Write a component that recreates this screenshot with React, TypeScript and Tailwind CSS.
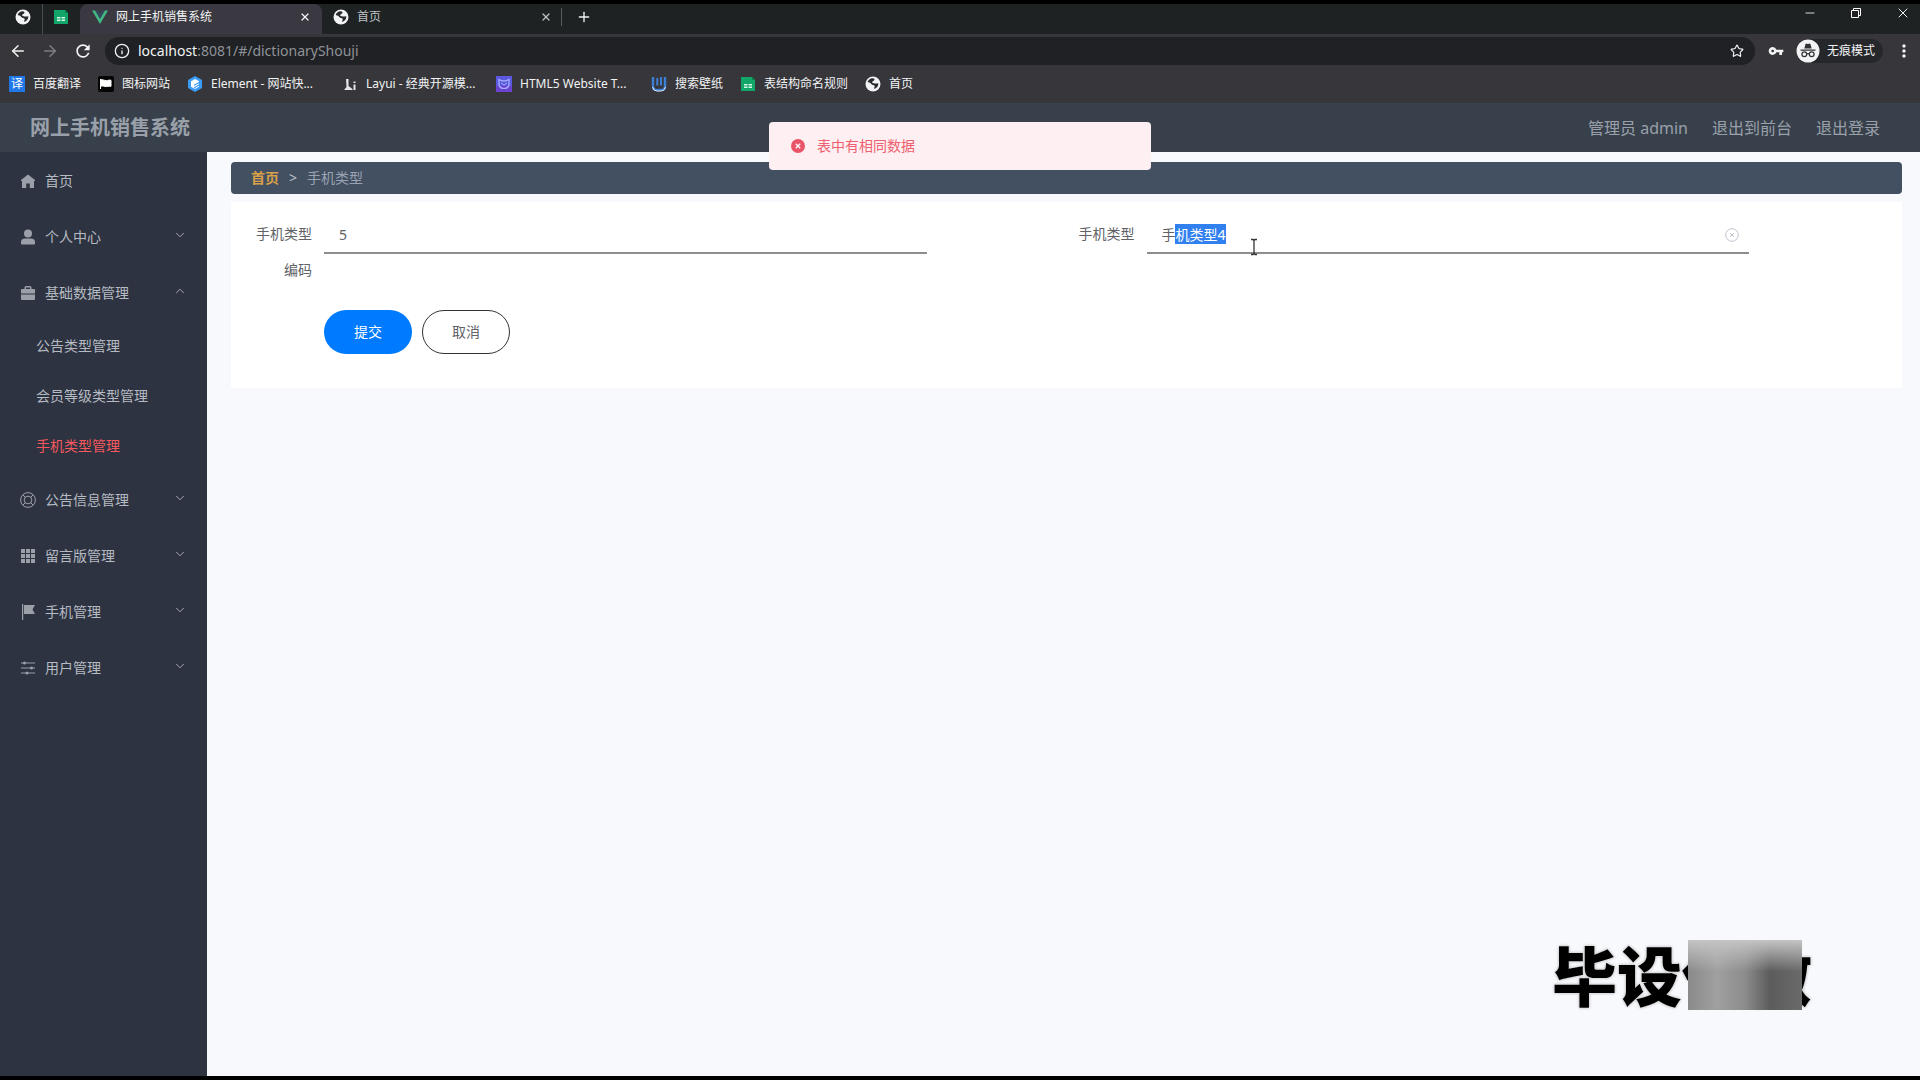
import { useEffect, useRef } from "react";
import type { ReactNode } from "react";
import { ArrowLeft, ArrowRight, ChevronDown, ChevronUp, Info, Minus, Plus, Star, X } from "lucide-react";
import { MdRefresh, MdVpnKey, MdMoreVert } from "react-icons/md";

// Browser icons
function GlobeIcon() {
  return (
    <svg viewBox="0 0 16 16" className="size-4 shrink-0">
      <circle cx="8" cy="8" r="7.5" fill="#f1f3f4" />
      <path
        d="M7.5 2.2c2 .3 2.400 1 1.700 2.100-.6 1-1.900.8-2.100 1.800-.2 1 1.300 1.200 2.500 1.300 1.600.1 3.100.2 3.700-.5.300 2.800-1.500 5-3.900 6-.6-1 .7-2.200.2-3.100-.6-1-2.700-.6-3.600-2.100C5.200 6.200 3.300 6.400 2.700 6 3.300 3.900 5 2.300 7.500 2.200z"
        fill="#26282b"
      />
    </svg>
  );
}

function SheetIcon() {
  return (
    <svg viewBox="0 0 16 16" className="size-4 shrink-0">
      <path d="M1 1h11l3 3v11H1z" fill="#12a66a" />
      <path d="M12 1l3 3h-3z" fill="#0a7d4e" />
      <path d="M4 8h3.500v1.500H4zM8.500 8H12v1.500H8.500zM4 10.500h3.500V12H4zM8.500 10.500H12V12H8.500z" fill="#d8f5e6" />
    </svg>
  );
}

function VueIcon() {
  return (
    <svg viewBox="0 0 16 16" className="size-4 shrink-0">
      <path d="M0 1.500h3.200L8 9.800l4.800-8.300H16L8 15z" fill="#41b883" />
      <path d="M3.200 1.500h3L8 4.600l1.800-3.100h3L8 9.800z" fill="#35495e" />
    </svg>
  );
}

function TranslateIcon() {
  return (
    <span className="flex size-4 shrink-0 items-center justify-center bg-[#2178e8] text-xs text-white">译</span>
  );
}

function FlagIcon() {
  return (
    <svg viewBox="0 0 16 16" className="size-4 shrink-0">
      <rect width="16" height="16" rx="2" fill="#050505" />
      <path d="M2.500 3v10M2.500 4c2-1 4 .8 6 .6 1.500-.1 3-.8 4.500-.3v6c-1.500-.5-3 .3-4.500.3-2 0-4-1.300-6-.3z" fill="#fff" stroke="#fff" />
    </svg>
  );
}

function ElementIcon() {
  return (
    <svg viewBox="0 0 16 16" className="size-4 shrink-0">
      <path d="M8 0l7 4v8l-7 4-7-4V4z" fill="#3a9cf5" />
      <path d="M8 3l3.800 2.100v1L7 8.800V10l4.800-2.700v1.300L7 11.300v1.200l4.800-2.700v1L8 13l-4-2.300V5.300z" fill="#fff" />
    </svg>
  );
}

function LayuiIcon() {
  return (
    <svg viewBox="0 0 16 16" className="size-4 shrink-0" fill="#e4e6e8">
      <path d="M4 3h2.500v7l4 3v1H2l2.500-3zM11.500 8.500h2V14h-2zM11.500 5.500h2V7h-2z" />
    </svg>
  );
}

function HtmlIcon() {
  return (
    <svg viewBox="0 0 16 16" className="size-4 shrink-0">
      <rect width="16" height="16" fill="#5b57de" />
      <rect y="10" width="16" height="6" fill="#6c43d0" />
      <path d="M3 3.500l3 1.300h4l3-1.300v5.500q-1 3.500-5 3.500T3 9z" fill="none" stroke="#a9b2ff" strokeWidth="1.200" />
      <path d="M5 7l3 2 3-2" fill="none" stroke="#a9b2ff" />
    </svg>
  );
}

function WallpaperIcon() {
  return (
    <svg viewBox="0 0 16 16" className="size-4 shrink-0" fill="none">
      <path d="M2 1v9.500q0 3.500 4 3.500h4q4 0 4-3.500V1" stroke="#3d7fd6" strokeWidth="2.400" />
      <path d="M6.300 2v7.500M10 1v8.500" stroke="#3d7fd6" strokeWidth="2" />
      <path d="M1.500 11q.8 4 4.500 4h4q3.700 0 4.500-4" stroke="#d5e6fb" />
    </svg>
  );
}

function IncognitoIcon() {
  return (
    <svg viewBox="0 0 24 24" className="size-6 shrink-0">
      <circle cx="12" cy="12" r="11.500" fill="#f1f3f4" />
      <path d="M8.300 9.500l1.200-4.300q.3-.8 1.200-.5l1.300.4 1.300-.4q.9-.3 1.200.5l1.200 4.300zM4.500 10.500h15v1.200h-15z" fill="#303134" />
      <g fill="none" stroke="#303134" strokeWidth="1.200">
        <circle cx="8.300" cy="15.300" r="2.400" />
        <circle cx="15.700" cy="15.300" r="2.400" />
        <path d="M10.700 15q1.300-.8 2.600 0" />
      </g>
    </svg>
  );
}

function RestoreIcon() {
  return (
    <svg viewBox="0 0 12 12" className="size-3" fill="none" stroke="#fff">
      <path d="M1.500 3.500h7v7h-7zM3.500 3.500v-2h7v7h-2" />
    </svg>
  );
}

// Sidebar icons
const ICON_CLASS = "size-4 shrink-0";

const HomeIcon = () => (
  <svg viewBox="0 0 16 16" className={ICON_CLASS} fill="currentColor">
    <path d="M8 1.500L15 7v1h-1v7H9.800v-4.500H6.200V15H2V8H1V7z" />
  </svg>
);

const UserIcon = () => (
  <svg viewBox="0 0 16 16" className={ICON_CLASS} fill="currentColor">
    <circle cx="8" cy="4.500" r="4" />
    <path d="M1 14.500V13q0-3.500 4-3.500h6q4 0 4 3.500v1.500q0 1-1 1H2q-1 0-1-1z" />
  </svg>
);

const CaseIcon = () => (
  <svg viewBox="0 0 16 16" className={ICON_CLASS} fill="currentColor">
    <path d="M4.500 4V2.500q0-1.500 1.500-1.500h4q1.500 0 1.500 1.500V4H14q1 0 1 1v3.500H1V5q0-1 1-1zM6 4h4V2.400H6zM1 9.500h14V14q0 1-1 1H2q-1 0-1-1z" />
  </svg>
);

const HelpIcon = () => (
  <svg viewBox="0 0 16 16" className={ICON_CLASS} fill="none" stroke="currentColor">
    <circle cx="8" cy="8" r="7.400" />
    <circle cx="8" cy="8" r="3.800" />
    <path d="M3 3l2.300 2.300M13 3l-2.300 2.300M3 13l2.300-2.300M13 13l-2.300-2.300" />
  </svg>
);

const GridIcon = () => (
  <svg viewBox="0 0 16 16" className={ICON_CLASS} fill="currentColor">
    <path d="M1 1h4v4H1zM6 1h4v4H6zM11 1h4v4h-4zM1 6h4v4H1zM6 6h4v4H6zM11 6h4v4h-4zM1 11h4v4H1zM6 11h4v4H6zM11 11h4v4h-4z" />
  </svg>
);

const FlagMenuIcon = () => (
  <svg viewBox="0 0 16 16" className={ICON_CLASS} fill="currentColor">
    <path d="M2 0h1.200v16H2zM4 1h11l-2.500 4.500L15 10H4z" />
  </svg>
);

const OperationIcon = () => (
  <svg viewBox="0 0 16 16" className={ICON_CLASS} fill="currentColor">
    <path d="M1 2.500h14v1H1zM1 7.500h14v1H1zM1 12.500h14v1H1z" />
    <circle cx="4.500" cy="3" r="1.500" />
    <circle cx="11.500" cy="8" r="1.500" />
    <circle cx="7" cy="13" r="1.500" />
  </svg>
);

const BOOKMARKS: { label: string; icon: ReactNode; width: string }[] = [
  { label: "百度翻译", icon: <TranslateIcon />, width: "w-[89px]" },
  { label: "图标网站", icon: <FlagIcon />, width: "w-[89px]" },
  { label: "Element - 网站快...", icon: <ElementIcon />, width: "w-[155px]" },
  { label: "Layui - 经典开源模...", icon: <LayuiIcon />, width: "w-[154px]" },
  { label: "HTML5 Website T...", icon: <HtmlIcon />, width: "w-[155px]" },
  { label: "搜索壁纸", icon: <WallpaperIcon />, width: "w-[89px]" },
  { label: "表结构命名规则", icon: <SheetIcon />, width: "w-[125px]" },
  { label: "首页", icon: <GlobeIcon />, width: "w-[60px]" },
];

const MENU = [
  { label: "首页", icon: HomeIcon },
  { label: "个人中心", icon: UserIcon, arrow: "down" },
  {
    label: "基础数据管理",
    icon: CaseIcon,
    arrow: "up",
    children: ["公告类型管理", "会员等级类型管理", "手机类型管理"],
  },
  { label: "公告信息管理", icon: HelpIcon, arrow: "down" },
  { label: "留言版管理", icon: GridIcon, arrow: "down" },
  { label: "手机管理", icon: FlagMenuIcon, arrow: "down" },
  { label: "用户管理", icon: OperationIcon, arrow: "down" },
];

const ACTIVE_ITEM = "手机类型管理";

function BrowserChrome() {
  return (
    <div className="shrink-0 bg-[#37363a] text-[#f1f3f4]">
      {/* Tab strip */}
      <div className="flex h-[30px] items-stretch bg-[#1f2223] text-xs">
        <div className="flex w-[42px] items-center pb-1 pl-[15px]">
          <GlobeIcon />
        </div>
        <div className="flex w-[38px] items-center border-l border-[#4a4c4f] pb-1 pl-[10px]">
          <SheetIcon />
        </div>
        <div className="flex w-[242px] items-center rounded-t-lg bg-[#3a3840] pr-[11px] pb-1 pl-3">
          <VueIcon />
          <span className="ml-2 flex-1">网上手机销售系统</span>
          <button aria-label="关闭标签页">
            <X className="size-3" strokeWidth={2.5} />
          </button>
        </div>
        <div className="flex w-[239px] items-center pr-[9px] pb-1 pl-[11px] text-[#bdc1c6]">
          <GlobeIcon />
          <span className="ml-2 flex-1">首页</span>
          <button aria-label="关闭标签页">
            <X className="size-3" strokeWidth={2.5} />
          </button>
        </div>
        <button aria-label="新标签页" className="mt-1 mb-2 border-l border-[#5a5c5f] pl-[14px]">
          <Plus className="size-4" />
        </button>
        <div className="ml-auto flex items-start gap-[33px] pt-[3px] pr-[9px]">
          <button aria-label="最小化" className="flex h-3 items-center">
            <Minus className="size-[14px]" strokeWidth={1.5} />
          </button>
          <button aria-label="还原" className="flex h-3 items-center">
            <RestoreIcon />
          </button>
          <button aria-label="关闭" className="flex h-3 items-center">
            <X className="size-4" strokeWidth={1.5} />
          </button>
        </div>
      </div>

      {/* Address bar */}
      <div className="flex h-[34px] items-center pr-[6px] pl-[9px]">
        <button aria-label="后退" className="w-8">
          <ArrowLeft className="size-[18px]" />
        </button>
        <button aria-label="前进" className="w-8 text-[#7d7f83]">
          <ArrowRight className="size-[18px]" />
        </button>
        <button aria-label="重新加载" className="w-8">
          <MdRefresh className="size-5" />
        </button>
        <div className="flex h-7 flex-1 items-center rounded-full bg-[#1f2125] pr-[11px] pl-[9px]">
          <Info className="size-4" />
          <span className="ml-2 flex-1 text-sm text-[#8f9297]">
            <span className="text-[#f1f3f4]">localhost</span>:8081/#/dictionaryShouji
          </span>
          <Star className="size-[14px]" />
        </div>
        <button aria-label="密码" className="ml-[13px]">
          <MdVpnKey className="size-4" />
        </button>
        <button className="ml-3 flex h-6 items-center gap-[7px] rounded-full bg-[#26272a] pr-2 text-xs">
          <IncognitoIcon />
          无痕模式
        </button>
        <button aria-label="更多" className="ml-[11px]">
          <MdMoreVert className="size-5" />
        </button>
      </div>

      {/* Bookmarks */}
      <div className="flex h-[35px] items-center pb-1 pl-[9px] text-xs">
        {BOOKMARKS.map((bookmark) => (
          <a key={bookmark.label} href="#" className={`${bookmark.width} flex shrink-0 items-center gap-2 whitespace-nowrap`}>
            {bookmark.icon}
            {bookmark.label}
          </a>
        ))}
      </div>
    </div>
  );
}

function Sidebar() {
  return (
    <nav className="w-[207px] shrink-0 bg-[#2d3340] pt-px text-sm text-[#b6bac2]">
      <ul>
        {MENU.map(({ label, icon: Icon, arrow, children }) => (
          <li key={label}>
            <a href="#" className="flex h-14 items-center gap-[9px] pr-5 pl-5">
              <span className="text-[#9a9fa8]">
                <Icon />
              </span>
              <span className="flex-1">{label}</span>
              {arrow === "down" && <ChevronDown className="mb-1 size-[14px]" strokeWidth={1.5} />}
              {arrow === "up" && <ChevronUp className="mb-1 size-[14px]" strokeWidth={1.5} />}
            </a>
            {children && (
              <ul className="pb-px">
                {children.map((child) => (
                  <li key={child}>
                    <a
                      href="#"
                      className={`flex h-[50px] items-center pl-9 ${child === ACTIVE_ITEM ? "text-[#f5595f]" : ""}`}
                    >
                      {child}
                    </a>
                  </li>
                ))}
              </ul>
            )}
          </li>
        ))}
      </ul>
    </nav>
  );
}

function TypeForm() {
  const nameRef = useRef<HTMLInputElement>(null);

  useEffect(() => {
    nameRef.current?.focus();
    nameRef.current?.setSelectionRange(1, 5);
  }, []);

  return (
    <form className="mt-2 bg-white pt-[14px] pr-[13px] pb-[34px] pl-[13px] text-sm text-[#606266]">
      <div className="grid grid-cols-2">
        <div className="flex items-start">
          <label htmlFor="code" className="w-20 pr-3 pl-2 text-right leading-9">
            手机类型编码
          </label>
          <input
            id="code"
            defaultValue="5"
            className="mr-[140px] h-[38px] min-w-0 flex-1 border-b-2 border-[#8b8d91] px-[15px] outline-none"
          />
        </div>
        <div className="flex items-start">
          <label htmlFor="name" className="w-20 pr-3 pl-2 text-right leading-9">
            手机类型
          </label>
          <div className="relative mr-[140px] min-w-0 flex-1">
            <input
              id="name"
              ref={nameRef}
              defaultValue="手机类型4"
              className="h-[38px] w-full border-b-2 border-[#8b8d91] px-[15px] outline-none selection:bg-[#3080f0] selection:text-white"
            />
            <button type="button" aria-label="清空" className="absolute top-3 right-[10px] text-[#c0c4cc]">
              <svg viewBox="0 0 14 14" className="size-[14px]" fill="none" stroke="currentColor">
                <circle cx="7" cy="7" r="6.300" />
                <path d="M5 5l4 4M9 5L5 9" />
              </svg>
            </button>
            {/* Text cursor */}
            <svg viewBox="0 0 8 18" className="absolute top-[22px] left-[103px] h-[18px] w-2" fill="none" stroke="#333">
              <path d="M1 1.500h2l1 1 1-1h2M4 2.500v13M1 16.500h2l1-1 1 1h2" strokeWidth="1.300" />
            </svg>
          </div>
        </div>
      </div>
      <div className="mt-[22px] flex gap-[10px] pl-20">
        <button type="button" className="h-11 w-[88px] rounded-[22px] bg-[#007bff] text-white">
          提交
        </button>
        <button type="button" className="h-11 w-[88px] rounded-[22px] border border-[#333]">
          取消
        </button>
      </div>
    </form>
  );
}

export default function App() {
  return (
    <div className="relative flex min-h-screen flex-col border-y-4 border-black font-['Noto_Sans','Noto_Sans_CJK_SC',sans-serif]">
      <BrowserChrome />

      <header className="flex h-[49px] shrink-0 items-center justify-between bg-[#38404c] pr-10 pl-[30px] text-[#9aa0aa]">
        <h1 className="text-xl font-bold">网上手机销售系统</h1>
        <div className="flex gap-6">
          <span>管理员 admin</span>
          <a href="#">退出到前台</a>
          <a href="#">退出登录</a>
        </div>
      </header>

      <div className="flex flex-1">
        <Sidebar />
        <main className="min-w-0 flex-1 bg-[#f7f9fd] pt-[10px] pr-[18px] pl-6">
          <div className="flex h-8 items-center gap-[10px] rounded bg-[#435062] px-5 text-sm text-[#9aa3b2]">
            <a href="#" className="font-bold text-[#d9a04a]">
              首页
            </a>
            <span className="text-[#c0c4cc]">&gt;</span>
            <span>手机类型</span>
          </div>
          <TypeForm />
        </main>
      </div>

      {/* Error message */}
      <div
        role="alert"
        className="absolute top-[118px] left-1/2 flex h-12 w-[382px] -translate-x-1/2 items-center gap-3 rounded bg-[#fef0f2] px-[22px] text-sm text-[#ee5f6f]"
      >
        <svg viewBox="0 0 14 14" className="size-[14px]">
          <circle cx="7" cy="7" r="7" fill="#ea5468" />
          <path d="M4.800 4.800l4.400 4.400M9.200 4.800L4.800 9.200" stroke="#fff" strokeWidth="1.300" />
        </svg>
        表中有相同数据
      </div>

      {/* Watermark */}
      <div className="absolute right-[108px] bottom-[67px] font-['Noto_Sans_CJK_SC',sans-serif] text-[65px] leading-[72px] font-black text-black [text-shadow:0_0_2px_#fff,0_0_3px_#888]">
        毕设代做
        <div className="absolute top-[3px] right-[10px] h-[70px] w-[114px] bg-[linear-gradient(to_bottom,#c4c4c4,transparent_45%),linear-gradient(to_right,#8a8a8a,#a0a0a0_25%,#8c8c8c_50%,#5c5c5c_72%,#6a6a6a)]" />
      </div>
    </div>
  );
}
